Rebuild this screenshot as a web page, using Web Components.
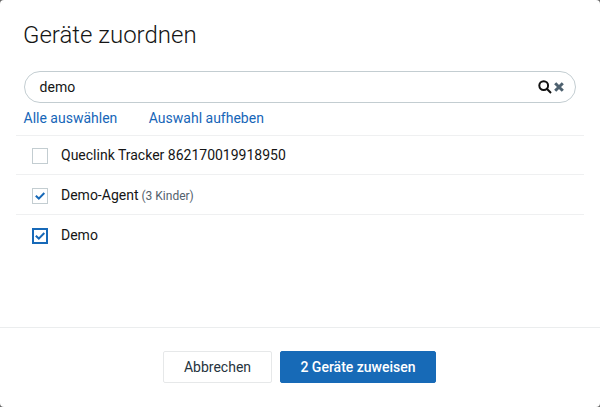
<!DOCTYPE html>
<html lang="de"><head><meta charset="utf-8"><title>Geräte zuordnen</title>
<style>
html,body{margin:0;height:100%;background:#666;overflow:hidden}
body{font-family:Roboto,"Liberation Sans",sans-serif;font-size:14px;color:#151515}
</style></head><body>
<device-dialog>
<span slot="title">Geräte zuordnen</span>
<search-field slot="search">demo</search-field>
<action-links slot="links"><span>Alle auswählen</span><span>Auswahl aufheben</span></action-links>
<device-row style="height:39px">Queclink Tracker 862170019918950</device-row>
<device-row checked>Demo-Agent<span slot="note">(3 Kinder)</span></device-row>
<device-row checked focused>Demo</device-row>
<dialog-button slot="footer" style="--w:109px">Abbrechen</dialog-button>
<dialog-button slot="footer" primary style="--w:156px">2 Geräte zuweisen</dialog-button>
</device-dialog>
<script>
function define(name, html){
  const t=document.createElement('template');t.innerHTML=html;
  customElements.define(name,class extends HTMLElement{
    constructor(){super();this.attachShadow({mode:'open'}).append(t.content.cloneNode(true));}
  });
}
define('device-dialog',`<style>
:host{display:flex;flex-direction:column;box-sizing:border-box;width:600px;height:407px;background:#fff;border-radius:4px;overflow:hidden}
h1{margin:0;padding:20px 23px 0;height:51px;font-size:24px;line-height:30px;font-weight:300}
main{flex:1}
footer{height:80px;border-top:1px solid #ebedee;display:flex;justify-content:center;gap:8px;padding:23px 1px 0 0;box-sizing:border-box}
</style><h1><slot name="title"></slot></h1><slot name="search"></slot><slot name="links"></slot><main><slot></slot></main><footer><slot name="footer"></slot></footer>`);
define('search-field',`<style>
:host{display:flex;align-items:center;box-sizing:border-box;height:32px;margin:0 24px;padding:0 11px 0 14.6px;border:1px solid #c3cdd1;border-radius:16px}
span{flex:1}svg{display:block}.x{margin-left:2px}
</style><span><slot></slot></span>
<svg width="14" height="14" viewBox="0 0 14 14" fill="none" stroke="#111" stroke-width="2"><circle cx="5.7" cy="5.6" r="4.4"/><path d="M8.8 8.8 13 13"/></svg>
<svg class="x" width="10" height="10" viewBox="0 0 10 10" fill="none" stroke="#4e616f" stroke-width="3"><path d="M1.2 1.2 8.8 8.8M8.8 1.2 1.2 8.8"/></svg>`);
define('action-links',`<style>
:host{display:flex;gap:31.5px;margin:0 24px 0 23.5px;height:32px;line-height:31px;color:#1666b8}
</style><slot></slot>`);
define('device-row',`<style>
:host{display:flex;align-items:center;box-sizing:border-box;height:40px;margin:0 16px;padding-left:16px;border-top:1px solid #eff0f1}
i{box-sizing:border-box;width:16px;height:16px;border:1px solid #c3cdd1;margin:2px 13px 0 0}
svg{display:none;width:14px;height:14px}
:host([checked]) svg{display:block}
:host([focused]) i{border:2px solid #1769b8}
:host([focused]) svg{margin:-1px}
slot[name=note]{font-size:12px;color:#53616d}
.n{margin-left:3px}
</style><i><svg viewBox="0 0 14 14" fill="none" stroke="#1769b8" stroke-width="2"><path d="M2.8 6.8 5.8 9.6 11.3 4"/></svg></i><span><slot></slot></span><span class="n"><slot name="note"></slot></span>`);
define('dialog-button',`<style>
:host{display:flex;align-items:center;justify-content:center;box-sizing:border-box;width:var(--w);height:32px;border:1px solid #e6e8e9;border-radius:2px;color:#26333d}
:host([primary]){background:#176ab7;border-color:#176ab7;color:#fff;font-weight:500}
</style><slot></slot>`);
</script></body></html>
